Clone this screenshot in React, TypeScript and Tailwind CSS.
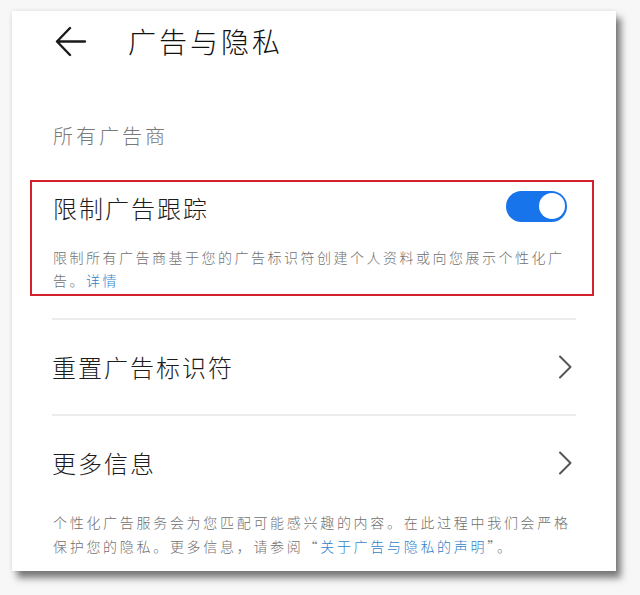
import { useState } from 'react';

const cjk = { fontFamily: '"Noto Sans CJK SC", "Noto Sans", sans-serif' };

function Chevron() {
  return (
    <svg width="14" height="24" viewBox="0 0 14 24" fill="none">
      <path d="M2 1.5 L12.5 12 L2 22.5" stroke="#555" strokeWidth="2" strokeLinecap="round" strokeLinejoin="round" />
    </svg>
  );
}

function Row({ label }: { label: string }) {
  return (
    <div className="flex items-center justify-between h-[94px] pr-[4px]">
      <span className="text-[24px] tracking-[2px] text-[#1c1c1c] font-light">{label}</span>
      <Chevron />
    </div>
  );
}

export default function App() {
  const [limited, setLimited] = useState(true);

  return (
    <div className="w-[640px] h-[595px] bg-[#f7f7f7] pl-3 pt-[11px]" style={cjk}>
      <div className="w-[604px] h-[560px] bg-white shadow-[5px_7px_7px_rgba(0,0,0,0.5),0_0_4px_rgba(0,0,0,0.1)] flex flex-col">
        <div className="flex items-center h-[58px] pt-[2px] pl-[43px]">
          <svg width="31" height="31" viewBox="0 0 31 31" fill="none">
            <path d="M15 2 L2 15.5 L15 29 M2 15.5 H30" stroke="#1a1a1a" strokeWidth="2.4" strokeLinecap="round" strokeLinejoin="round" />
          </svg>
          <h1 className="ml-[42px] text-[28px] leading-none tracking-[3px] text-[#111] font-light">广告与隐私</h1>
        </div>

        <div className="pl-[41px] mt-[53px] text-[20px] leading-[28px] tracking-[3px] text-[#7a7a7a] font-light">所有广告商</div>

        <div className="ml-[18px] w-[564px] mt-[30px] border-2 border-[#d3222c] pl-[21px] pr-[25px] pt-[8px] pb-[2px]">
          <div className="flex items-center justify-between h-[32px]">
            <span className="text-[24px] tracking-[2px] text-[#1c1c1c] font-light mt-[3px]">限制广告跟踪</span>
            <button
              onClick={() => setLimited(!limited)}
              className={`w-[61px] h-[31px] rounded-full p-[2.5px] flex ${limited ? 'bg-[#1774ea] justify-end' : 'bg-[#cfcfcf] justify-start'}`}
            >
              <span className="w-[26px] h-[26px] rounded-full bg-white" />
            </button>
          </div>
          <p className="mt-[24px] -mr-[6px] text-[14px] leading-[23px] tracking-[2.5px] text-[#707070] font-light">
            限制所有广告商基于您的广告标识符创建个人资料或向您展示个性化广告。<span className="text-[#2f7fc6]">详情</span>
          </p>
        </div>

        <div className="mx-[40px] mt-[22px]">
          <div className="h-[2px] bg-[#ececec]" />
          <Row label="重置广告标识符" />
          <div className="h-[2px] bg-[#ececec]" />
          <Row label="更多信息" />
        </div>

        <p className="pl-[41px] pr-[40px] text-[14px] leading-[24px] tracking-[2.7px] text-[#707070] font-light">
          个性化广告服务会为您匹配可能感兴趣的内容。在此过程中我们会严格保护您的隐私。更多信息，请参阅“<span className="text-[#2f7fc6]">关于广告与隐私的声明</span>”。
        </p>
      </div>
    </div>
  );
}
